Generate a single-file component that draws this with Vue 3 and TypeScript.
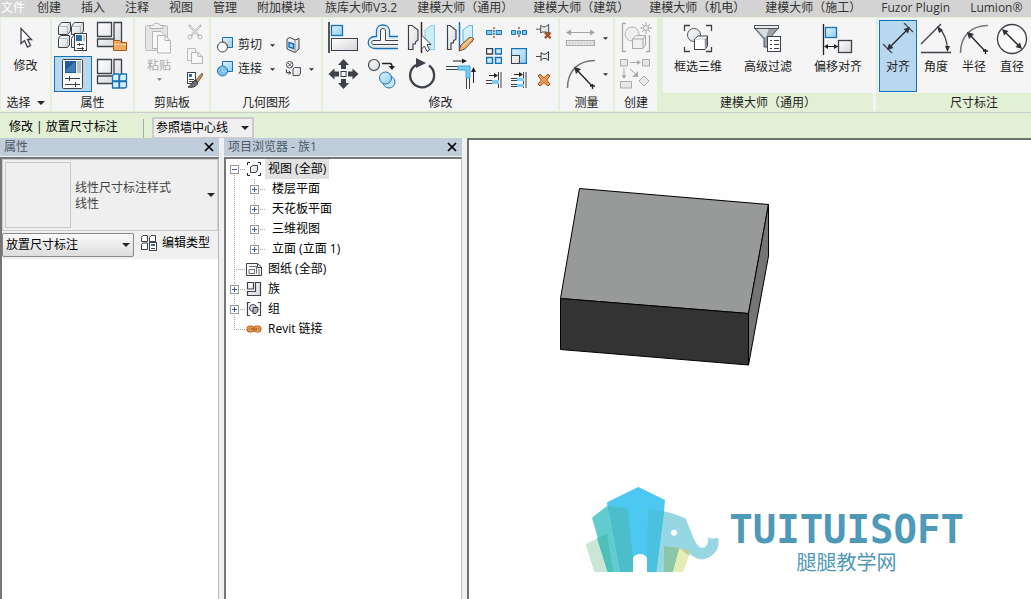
<script setup lang="ts">
import { ref } from 'vue'

interface TreeNode {
  label: string
  icon?: string
  children?: TreeNode[]
  expandable?: boolean
}

const tabs = [
  '文件', '创建', '插入', '注释', '视图', '管理', '附加模块', '族库大师V3.2',
  '建模大师（通用）', '建模大师（建筑）', '建模大师（机电）', '建模大师（施工）',
  'Fuzor Plugin', 'Lumion®',
]

const propertyTools = [
  { icon: 'family-types', name: '族类型', on: false },
  { icon: 'family-category', name: '族类别', on: false },
  { icon: 'properties', name: '属性', on: true },
  { icon: 'type-properties', name: '类型属性', on: false },
]

const clipTools = [
  { icon: 'cut', name: '剪切' },
  { icon: 'copy', name: '复制' },
  { icon: 'match', name: '匹配类型' },
]

const modifyLarge = [
  { icon: 'align', name: '对齐' },
  { icon: 'offset', name: '偏移' },
  { icon: 'mirror-pick', name: '镜像-拾取轴' },
  { icon: 'mirror-draw', name: '镜像-绘制轴' },
  { icon: 'move', name: '移动' },
  { icon: 'copy-element', name: '复制' },
  { icon: 'rotate', name: '旋转' },
  { icon: 'trim', name: '修剪' },
]

const modifySmall = [
  { icon: 'split', name: '拆分图元' },
  { icon: 'split-gap', name: '用间隙拆分' },
  { icon: 'unpin', name: '解锁' },
  { icon: 'array', name: '阵列' },
  { icon: 'scale', name: '缩放' },
  { icon: 'pin', name: '锁定' },
  { icon: 'trim-one', name: '修剪单个图元' },
  { icon: 'trim-many', name: '修剪多个图元' },
  { icon: 'delete', name: '删除' },
]

const masterTools = [
  { icon: 'box-3d', name: '框选三维' },
  { icon: 'filter', name: '高级过滤' },
  { icon: 'offset-align', name: '偏移对齐' },
]

const dimensionTools = [
  { icon: 'dim-aligned', name: '对齐' },
  { icon: 'dim-angular', name: '角度' },
  { icon: 'dim-radial', name: '半径' },
  { icon: 'dim-diameter', name: '直径' },
]

const activeDimension = ref('对齐')
const viewsOpen = ref(true)

const tree: TreeNode[] = [
  {
    label: '视图 (全部)',
    icon: 'tree-views',
    expandable: true,
    children: [
      { label: '楼层平面' },
      { label: '天花板平面' },
      { label: '三维视图' },
      { label: '立面 (立面 1)' },
    ],
  },
  { label: '图纸 (全部)', icon: 'tree-sheets' },
  { label: '族', icon: 'tree-family', expandable: true },
  { label: '组', icon: 'tree-group', expandable: true },
  { label: 'Revit 链接', icon: 'tree-link' },
]
</script>

<template>
  <svg class="defs" aria-hidden="true">
    <defs>
      <linearGradient id="metal" x1="0" y1="0" x2="1" y2="1">
        <stop offset="0" stop-color="#fff" /><stop offset="1" stop-color="#d4d6d9" />
      </linearGradient>
      <linearGradient id="glass" x1="0" y1="0" x2="1" y2="1">
        <stop offset="0" stop-color="#e2f4fc" /><stop offset="1" stop-color="#8fcdee" />
      </linearGradient>
    </defs>

    <symbol id="caret" viewBox="0 0 8 4"><path d="M0 0H8L4 4Z" fill="#24272c" /></symbol>

    <symbol id="cursor" viewBox="0 0 16 24">
      <path d="M3 1.500V16.500L6.500 13.500L9.500 20L12.500 18.500L9.500 12.500H13.500Z" fill="#fff" stroke="#3c414a" stroke-width="1.300" />
    </symbol>

    <symbol id="family-types" viewBox="0 0 32 32">
      <g fill="url(#metal)" stroke="#3c414a" stroke-linejoin="round">
        <path d="M1.500 5.500L4.500 1.500H13.500V10L10.500 13.500H1.500Z" />
        <path d="M14.500 5.500L17.500 1.500H26.500V10L23.500 13.500H14.500Z" />
        <path d="M1.500 17.500L3.500 14.500H12.500V24L10.500 26.500H1.500Z" />
        <path d="M14.500 17.500L16.500 14.500H24V26.500H14.500Z" />
      </g>
      <path d="M2 5.500H10.500V13M10.500 5.500L13 2M15 5.500H23.500V12M23.500 5.500L26 2M2 17.500H10.500V26" fill="none" stroke="#b5b8bd" />
      <rect x="17.500" y="12.500" width="12" height="17" fill="#fff" stroke="#3c414a" />
      <rect x="19" y="14" width="6" height="6" fill="#2d6aa8" /><rect x="26" y="14" width="2" height="6" fill="#c3c7cb" />
      <path d="M20 23.500H27M22.500 22V25M20 27.500H27M25.500 26V29" stroke="#3c414a" />
    </symbol>

    <symbol id="family-category" viewBox="0 0 32 32">
      <g fill="url(#metal)" stroke="#3c414a" stroke-width="1.300" stroke-linejoin="round">
        <path d="M1.500 1.500H15.500V15.500H1.500ZM18 1.500H25.500V24.500H18ZM1.500 18H18V25.500H1.500Z" />
      </g>
      <path d="M17.500 29.500V19.500H23.500L25 21.500H30.500V29.500Z" fill="#f0a95e" stroke="#a65a1c" />
      <path d="M18 23.500H30" stroke="#ffd3a0" />
    </symbol>

    <symbol id="properties" viewBox="0 0 32 32">
      <rect x="5.500" y="1.500" width="20" height="29" rx="1" fill="#fbfbfb" stroke="#3c414a" />
      <rect x="8" y="3" width="11" height="12" fill="#245a96" /><path d="M9 12L18 4V14H9Z" fill="#3f7db9" />
      <rect x="20" y="3" width="4" height="12" fill="#b9bfc6" />
      <path d="M8 20.500H23M12.500 18V23M8 26.500H23M18.500 24V29" stroke="#3c414a" />
    </symbol>

    <symbol id="type-properties" viewBox="0 0 32 32">
      <g fill="url(#metal)" stroke="#3c414a" stroke-width="1.300" stroke-linejoin="round">
        <path d="M1.500 1.500H15.500V15.500H1.500ZM18 1.500H25.500V18H18ZM1.500 18H18V25.500H1.500Z" />
      </g>
      <g fill="#d5effb" stroke="#1771b8" stroke-width="1.300" stroke-linejoin="round">
        <path d="M16.500 17.500L18 16H23V23H16.500ZM23.500 17.500L25 16H30.500V22L29 23H23.500ZM16.500 23.500H23V30H16.500ZM23.500 23.500H30.500V29L29 30H23.500Z" />
      </g>
    </symbol>

    <symbol id="paste" viewBox="0 0 32 32">
      <rect x="2.500" y="3.500" width="22" height="25" rx="1" fill="#e4e4e4" stroke="#bcbcbc" />
      <path d="M7 6.500V3.500H10C10 .5 17 .5 17 3.500H20V6.500Z" fill="#f0f0f0" stroke="#b0b0b0" />
      <path d="M9.500 9.500H18L22.500 14V26.500H9.500Z" fill="#f8f8f8" stroke="#b5b5b5" />
      <path d="M14.500 13.500H22L27.500 18.500V31H14.500Z" fill="#f8f8f8" stroke="#b5b5b5" /><path d="M22 13.500V18.500H27" fill="none" stroke="#b5b5b5" />
    </symbol>
    <symbol id="cut" viewBox="0 0 16 16">
      <path d="M2 1L12 12M14 1L4 12" stroke="#b4b4b4" stroke-width="2" /><path d="M3 2L12 12M13 2L4 12" stroke="#eee" />
      <circle cx="3" cy="13" r="2" fill="none" stroke="#b4b4b4" /><circle cx="13" cy="13" r="2" fill="none" stroke="#b4b4b4" />
    </symbol>
    <symbol id="copy" viewBox="0 0 16 16">
      <path d="M.5 .5H8.500V12.500H.5Z" fill="#f5f5f5" stroke="#bbb" /><path d="M4.500 4.500H11L15.500 8.500V15.500H4.500ZM11 4.500V8.500H15" fill="#f8f8f8" stroke="#b4b4b4" />
    </symbol>
    <symbol id="match" viewBox="0 0 16 16">
      <rect x=".5" y=".5" width="8" height="11" fill="#fff" stroke="#3c414a" /><rect x="2" y="2" width="3" height="3" fill="#2d6aa8" />
      <path d="M2 7.500H7M2 9.500H6" stroke="#3c414a" />
      <path d="M15 1L9 8L11 10L16 3Z" fill="#c98e52" stroke="#54412f" stroke-width=".7" /><path d="M8 8L11 11C9 15 5 16 1 15C4 14 5 10 8 8Z" fill="#6a6e73" stroke="#33363b" />
    </symbol>

    <symbol id="cut-geometry" viewBox="0 0 16 16">
      <path d="M5.500 .5H15.500V10.500H5.500Z" fill="url(#glass)" stroke="#1771b8" /><circle cx="5.500" cy="10" r="5" fill="#fdfdfd" stroke="#3c414a" /><path d="M5.500 5A5 5 0 0 1 10.500 10" fill="none" stroke="#a84a20" />
    </symbol>
    <symbol id="join-geometry" viewBox="0 0 16 16">
      <path d="M5.500 .5H15.500V10.500H5.500Z" fill="url(#glass)" stroke="#1771b8" /><circle cx="5.500" cy="10" r="5" fill="#7dbfe6" stroke="#1771b8" /><path d="M5.500 5.500V10.500H10" fill="none" stroke="#a9d9f3" />
    </symbol>
    <symbol id="cope" viewBox="0 0 16 16">
      <path d="M2 2L5 .5L10 3L14 1.500V12L10 15.500L2 12Z" fill="url(#metal)" stroke="#3c414a" /><path d="M10 3V15" stroke="#8a8e94" /><path d="M4 5.500L8.500 7V11.500L4 10Z" fill="#a9d9f3" stroke="#1771b8" stroke-width="1.500" />
    </symbol>
    <symbol id="paint" viewBox="0 0 17 17">
      <circle cx="5" cy="4" r="3.500" fill="#fff" stroke="#3c414a" /><path d="M3 2L7 6M7 2L3 6" stroke="#3c414a" /><path d="M1.500 9V12.500H6M4 10.500L6 12.500L4 14.500" fill="none" stroke="#222" />
      <path d="M8.500 8.500L10 7H16.500V13L15 15.500H8.500Z" fill="url(#metal)" stroke="#3c414a" />
    </symbol>

    <symbol id="align" viewBox="0 0 32 32">
      <path d="M1 0V31" stroke="#222" stroke-width="1.500" /><rect x="3.500" y="3.500" width="11" height="10" fill="url(#glass)" stroke="#1771b8" stroke-width="1.300" />
      <rect x="3.500" y="16.500" width="26" height="12" fill="url(#metal)" stroke="#3c414a" />
    </symbol>
    <symbol id="offset" viewBox="0 0 32 32">
      <path d="M31 18.500H18.500V9C18.500 5.500 13.500 5.500 13.500 9V18.500H7C3.500 18.500 3.500 22.500 7 22.500H31" fill="none" stroke="#3c414a" />
      <path d="M31 14.500H22.500V9C22.500 1 9.500 1 9.500 9V14.500H8C-1 14.500 -1 26.500 8 26.500H31" fill="none" stroke="#1771b8" stroke-width="1.300" />
      <path d="M31 16.500H20.500V9C20.500 3 11.500 3 11.500 9V16.500H8C2 16.500 2 24.500 8 24.500H31" fill="none" stroke="#dfe8ee" />
    </symbol>
    <symbol id="mirror-pick" viewBox="0 0 32 32">
      <path d="M2.500 3.500H6L12 8V18L9.500 20V22H7V27.500H2.500Z" fill="url(#metal)" stroke="#3c414a" stroke-width="1.200" /><path d="M28.500 3.500H25L19 8V18L21 20V22H24V27.500H28.500Z" fill="#cbeef6" stroke="#8dc9e1" />
      <path d="M15.500 0V31" stroke="#3d2420" stroke-width="1.500" /><path d="M15.500 13V27L18.500 24L21 29.500L23.500 28L21 22.500H25Z" fill="#fff" stroke="#3c414a" />
    </symbol>
    <symbol id="mirror-draw" viewBox="0 0 32 32">
      <path d="M2.500 3.500H5L11 8V17L8.500 19V21H6V27.500H2.500Z" fill="url(#metal)" stroke="#3c414a" stroke-width="1.200" /><path d="M27.500 3.500H24L18 8V20H27.500Z" fill="#d3effa" stroke="#62b3df" />
      <path d="M14.500 0V28" stroke="#1771b8" stroke-width="1.500" /><path d="M14 29L16 23L25 15L29 17L20 27Z" fill="#f1b370" stroke="#75502f" /><path d="M18 24L27 16" stroke="#ffe3b8" />
    </symbol>
    <symbol id="move" viewBox="0 0 32 32">
      <path d="M15.500 1L21 7H18V11H13V7H10ZM15.500 31L21 25H18V21H13V25H10ZM.5 16L6.500 10.500V13.500H11V18.500H6.500V21.500ZM30.500 16L24.500 10.500V13.500H20V18.500H24.500V21.500Z" fill="#3c414a" /><rect x="13" y="13.500" width="5" height="5" fill="#fff" stroke="#3c414a" />
    </symbol>
    <symbol id="copy-element" viewBox="0 0 32 32">
      <circle cx="7" cy="7" r="5.500" fill="url(#metal)" stroke="#3c414a" stroke-width="1.200" /><path d="M15 5.500H23Q25 5.500 25 9" fill="none" stroke="#222" stroke-width="1.500" /><path d="M21.500 8H28L25 12Z" fill="#222" />
      <circle cx="22" cy="24" r="6" fill="#c7e9f8" stroke="#1771b8" /><circle cx="18.500" cy="20" r="6" fill="url(#glass)" stroke="#1771b8" />
    </symbol>
    <symbol id="rotate" viewBox="0 0 32 32">
      <path d="M10 7A12 12 0 1 0 23 7.500" fill="none" stroke="#3c414a" stroke-width="2.300" /><path d="M10 8L14 5.500" stroke="#3c414a" stroke-width="2.300" /><path d="M10 0L20 5L10 10Z" fill="#3c414a" />
    </symbol>
    <symbol id="trim" viewBox="0 0 32 32">
      <path d="M1 8.500H13M1 11.500H13M21.500 20V31M24.500 20V31" stroke="#3c414a" /><path d="M13 8H25V20H21V12H13Z" fill="#7acdf1" stroke="#3ba4dc" />
      <path d="M8 3H19M28.500 25V12" stroke="#222" /><path d="M17 .5L22 3L17 5.500ZM26 14H31L28.500 9Z" fill="#222" />
    </symbol>

    <symbol id="split" viewBox="0 0 16 16"><path d="M.5 6.500H6V10.500H.5ZM10 6.500H15.500V10.500H10Z" fill="#81cdf0" stroke="#1771b8" /><path d="M6 7H10V10H6Z" fill="#a5dcf4" /><path d="M8 3V14" stroke="#8f4a2a" stroke-dasharray="2 1" stroke-width="1.300" /></symbol>
    <symbol id="split-gap" viewBox="0 0 16 16"><path d="M.5 6.500H4.500V10.500H.5ZM11.500 6.500H15.500V10.500H11.500ZM6.500 7H9.500V10H6.500Z" fill="#81cdf0" stroke="#1771b8" /><path d="M8 3V6M8 11V14" stroke="#8f4a2a" stroke-dasharray="2 1" stroke-width="1.300" /></symbol>
    <symbol id="pin" viewBox="0 0 16 16"><path d="M0 8.500H5" stroke="#444" /><path d="M5 4.500V12.500L7 10.500H10L12.500 12.500V3.500L10 6H7Z" fill="url(#metal)" stroke="#3c414a" /></symbol>
    <symbol id="unpin" viewBox="0 0 17 17"><path d="M0 5.500H5" stroke="#444" /><path d="M5 1.500V9.500L7 8.500H10L13.500 9.500V.5L10 3H7Z" fill="url(#metal)" stroke="#3c414a" /><path d="M9.500 9L15.500 15M15.500 9L9.500 15" stroke="#a94c1c" stroke-width="2.500" /></symbol>
    <symbol id="array" viewBox="0 0 16 16"><path d="M.5 .5H6.500V6H.5Z" fill="#fff" stroke="#3c414a" stroke-width="1.500" /><path d="M9.500 .5H15.500V6H9.500ZM.5 9.500H6.500V15.500H.5ZM9.500 9.500H15.500V15.500H9.500Z" fill="#caeafa" stroke="#1771b8" stroke-width="1.500" /></symbol>
    <symbol id="scale" viewBox="0 0 16 16"><path d="M.5 .5H15.500V15.500H.5Z" fill="url(#glass)" stroke="#1771b8" stroke-width="1.300" /><rect x=".5" y="7.500" width="8" height="8" fill="url(#metal)" stroke="#3c414a" /></symbol>
    <symbol id="trim-one" viewBox="0 0 16 16"><path d="M0 8.500H6M0 11.500H6M12.500 0V16M15 0V16" stroke="#3c414a" /><rect x="6" y="8" width="7" height="4" fill="#7acdf1" /><path d="M3 3.500H9" stroke="#222" /><path d="M8 1L12 3.500L8 6Z" fill="#222" /></symbol>
    <symbol id="trim-many" viewBox="0 0 16 16"><path d="M0 6.500H6M0 8.500H6M0 12.500H6M0 14.500H6M12.500 0V16M15 0V16" stroke="#3c414a" /><path d="M6 6H13V9H6ZM6 12H13V15H6Z" fill="#7acdf1" /><path d="M3 2.500H9" stroke="#222" /><path d="M8 0L12 2.500L8 5Z" fill="#222" /></symbol>
    <symbol id="delete" viewBox="0 0 16 16"><path d="M2 4L4 2L8 6L12 2L14 4L10.500 8L14 12L12 14L8 10.500L4 14L2 12L5.500 8Z" fill="#f09b51" stroke="#a04a18" /></symbol>

    <symbol id="measure" viewBox="0 0 32 32"><path d="M3 10.500H28" stroke="#a5a5a5" /><path d="M1 10.500L6 7.500V13.500ZM30 10.500L25 7.500V13.500Z" fill="#a5a5a5" /><rect x="1.500" y="18.500" width="28" height="5" fill="#e4e4e4" stroke="#aaa" /><path d="M4 21H29" stroke="#aaa" stroke-dasharray="1 2" /></symbol>
    <symbol id="dim-radial" viewBox="0 0 32 32"><path d="M2.500 30C2.500 13 13 2.500 30 2.500" fill="none" stroke="#74787e" stroke-width="1.500" /><path d="M11 11L27 28M25 28H30M27.500 26V31" stroke="#222" stroke-width="1.300" /><path d="M9 9L16 11L11 16Z" fill="#2f3339" /></symbol>
    <symbol id="create-group" viewBox="0 0 32 32"><path d="M6 1.500H2.500V29.500H6M26 29.500H29.500V13" fill="none" stroke="#aaa" stroke-width="1.300" /><circle cx="12" cy="12" r="7" fill="#efefef" stroke="#b4b4b4" /><path d="M12.500 17L16 13.500H25.500V23L23 26.500H12.500ZM12.500 17H23V26M23 17L25.500 14" fill="#efefef" stroke="#aaa" /><path d="M26 0V12M20 6H32M22 2L30 10M30 2L22 10" stroke="#aaa" /><circle cx="26" cy="6" r="2.500" fill="#eee" stroke="#aaa" /></symbol>
    <symbol id="create-similar" viewBox="0 0 32 32"><path d="M.5 1.500H7.500V8H.5ZM22.500 1.500H29.500V8H22.500ZM.5 23.500H11.500V30H.5ZM24 18L29 23L24 28L19 23Z" fill="#e8e8e8" stroke="#aaa" /><path d="M10 4.500H19M4 10V20M10 11L18 18" stroke="#aaa" /><path d="M17 2L21 4.500L17 7ZM1.500 17H6.500L4 21ZM18 13V19H12Z" fill="#aaa" /></symbol>

    <symbol id="box-3d" viewBox="0 0 32 32"><path d="M2.500 8V2.500H8M24 2.500H29.500V8M2.500 24V28.500H8M24 28.500H29.500V24" fill="none" stroke="#3c414a" stroke-width="1.300" /><circle cx="12" cy="12" r="6.500" fill="url(#metal)" stroke="#50555d" /><path d="M12.500 16L16 13H25.500V23L23 26.500H12.500Z" fill="#fff" stroke="#3c414a" /><path d="M13 16H23V26" fill="none" stroke="#c5c8cc" /><path d="M23 16L25 14V22L23 26Z" fill="#8b9098" /></symbol>
    <symbol id="filter" viewBox="0 0 32 32"><path d="M2.500 5L12 16V24H17V16L26.500 5Z" fill="#9ca1a8" stroke="#50555d" /><path d="M4 5L12 14H14L17 5Z" fill="#dadde0" /><rect x="2.500" y="2.500" width="24" height="3" fill="#e9eaec" stroke="#50555d" /><rect x="15.500" y="13.500" width="13" height="15" fill="#fff" stroke="#3c414a" /><path d="M18 17.500H20M22 17.500H27M18 21.500H20M22 21.500H27M18 25.500H20M22 25.500H27" stroke="#3c414a" /></symbol>
    <symbol id="offset-align" viewBox="0 0 32 32"><path d="M1.500 1V32" stroke="#222" stroke-width="1.300" /><rect x="3.500" y="4.500" width="11" height="10" fill="url(#glass)" stroke="#1771b8" stroke-width="1.300" /><rect x="16.500" y="17.500" width="13" height="12" fill="url(#metal)" stroke="#3c414a" stroke-width="1.300" /><path d="M3 23.500H16" stroke="#222" /><path d="M2 23.500L6 21V26ZM16 23.500L12 21V26Z" fill="#222" /></symbol>
    <symbol id="dim-aligned" viewBox="0 0 32 32"><path d="M7 25L26 6" stroke="#222" stroke-width="1.300" /><path d="M1 21L10 30M22 0L31 9" stroke="#3c414a" stroke-width="1.200" /><path d="M5 27L7 20.500L11.500 25ZM28 4L26 10.500L21.500 6Z" fill="#2f3339" /></symbol>
    <symbol id="dim-angular" viewBox="0 0 32 32"><path d="M1 29.500H31M1 21L21 1" stroke="#3c414a" stroke-width="1.300" /><path d="M19 5Q27 13 27.500 27" fill="none" stroke="#3c414a" stroke-width="1.300" /><path d="M17 3L23 7L19 10ZM27.500 29L25 23H30Z" fill="#2f3339" /></symbol>
    <symbol id="dim-diameter" viewBox="0 0 32 32"><circle cx="16" cy="16" r="14.500" fill="#fafafa" stroke="#3c414a" stroke-width="1.300" /><path d="M8 8L24 24" stroke="#222" stroke-width="1.300" /><path d="M6 6L12.500 8L8 12.500ZM26 26L24 19.500L19.500 24Z" fill="#2f3339" /></symbol>

    <symbol id="tree-views" viewBox="0 0 16 16"><path d="M1.500 4V1.500H4M12 1.500H14.500V4M1.500 12V14.500H4M12 14.500H14.500V12" fill="none" stroke="#222" /><path d="M4.500 6L7 4.500H11.500V9L10 11.500H4.500Z" fill="url(#metal)" stroke="#3c414a" /></symbol>
    <symbol id="tree-sheets" viewBox="0 0 16 16"><path d="M.5 2.500H11.500L15.500 6V14.500H.5ZM11.500 3V6.500H15" fill="#fafafa" stroke="#3c414a" /><path d="M3 12.500V8.500H8.500V12.500ZM3 5.500H10.500V12.500M13 8V14" fill="none" stroke="#6d7279" /></symbol>
    <symbol id="tree-family" viewBox="0 0 16 16"><path d="M1.500 1.500H7.500V8H1.500ZM9.500 1.500H14.500V14.500H1.500V10.500H9.500Z" fill="url(#metal)" stroke="#3c414a" stroke-width="1.200" /></symbol>
    <symbol id="tree-group" viewBox="0 0 16 16"><path d="M4 1.500H1.500V14.500H4M12 1.500H14.500V14.500H12" fill="none" stroke="#3c414a" stroke-width="1.200" /><circle cx="7" cy="7" r="3.500" fill="#ddd" stroke="#3c414a" /><path d="M7 6.500H12V10L10 12.500H7Z" fill="#aeb2b7" stroke="#3c414a" /></symbol>
    <symbol id="tree-link" viewBox="0 0 16 16"><g fill="none" stroke="#a85816" stroke-width="3"><rect x="2" y="6" width="5" height="4" rx="2" /><rect x="9" y="6" width="5" height="4" rx="2" /></g><g fill="none" stroke="#f1a04a" stroke-width="1.300"><rect x="2" y="6" width="5" height="4" rx="2" /><rect x="9" y="6" width="5" height="4" rx="2" /></g><path d="M5 8H11" stroke="#a85816" /></symbol>
    <symbol id="edit-type" viewBox="0 0 16 16"><path d="M.5 2.500L2 .5H6.500V6.500H.5ZM8.500 2.500L10 .5H14.500V6.500H8.500ZM.5 9.500L2 8H6.500V14.500H.5Z" fill="#fff" stroke="#3c414a" /><rect x="8.500" y="7.500" width="7" height="8" fill="#fff" stroke="#3c414a" /><rect x="10" y="9" width="4" height="2" fill="#2d6aa8" /><path d="M10 13.500H14" stroke="#3c414a" /></symbol>
    <symbol id="close" viewBox="0 0 10 10"><path d="M1 1L9 9M9 1L1 9" stroke="#000" stroke-width="1.700" /></symbol>
  </svg>

  <div class="app">
    <nav class="tabs">
      <button v-for="(tab, i) in tabs" :key="tab" class="tab" :class="{ file: i === 0 }">{{ tab }}</button>
    </nav>

    <header class="ribbon">
      <section class="panel select-panel">
        <button class="stack">
          <svg class="pointer"><use href="#cursor" /></svg><span>修改</span>
        </button>
        <button class="title">选择 <svg class="caret-md"><use href="#caret" /></svg></button>
      </section>

      <section class="panel">
        <div class="prop-grid">
          <button v-for="t in propertyTools" :key="t.icon" :class="{ on: t.on }" :aria-label="t.name">
            <svg class="i32"><use :href="'#' + t.icon" /></svg>
          </button>
        </div>
        <h2 class="title">属性</h2>
      </section>

      <section class="panel clip-panel">
        <div class="clip">
          <button class="stack paste" disabled>
            <svg class="i32"><use href="#paste" /></svg><span>粘贴</span>
            <svg class="caret-sm"><use href="#caret" /></svg>
          </button>
          <div class="small-column">
            <button v-for="t in clipTools" :key="t.icon" :aria-label="t.name"><svg class="i16"><use :href="'#' + t.icon" /></svg></button>
          </div>
        </div>
        <h2 class="title">剪贴板</h2>
      </section>

      <section class="panel">
        <div class="geometry">
          <div class="geometry-row">
            <button class="inline"><svg class="i16"><use href="#cut-geometry" /></svg>剪切<svg class="caret-sm"><use href="#caret" /></svg></button>
            <button aria-label="应用连接端切割"><svg class="i16"><use href="#cope" /></svg></button>
          </div>
          <div class="geometry-row">
            <button class="inline"><svg class="i16"><use href="#join-geometry" /></svg>连接<svg class="caret-sm"><use href="#caret" /></svg></button>
            <button class="inline" aria-label="填色"><svg class="i16"><use href="#paint" /></svg><svg class="caret-sm"><use href="#caret" /></svg></button>
          </div>
        </div>
        <h2 class="title">几何图形</h2>
      </section>

      <section class="panel">
        <div class="modify">
          <div class="large-grid">
            <button v-for="t in modifyLarge" :key="t.icon" :aria-label="t.name"><svg class="i32"><use :href="'#' + t.icon" /></svg></button>
          </div>
          <div class="small-grid">
            <button v-for="t in modifySmall" :key="t.icon" :aria-label="t.name"><svg class="i16"><use :href="'#' + t.icon" /></svg></button>
          </div>
        </div>
        <h2 class="title">修改</h2>
      </section>

      <section class="panel">
        <div class="pair">
          <button class="inline" aria-label="测量"><svg class="i32"><use href="#measure" /></svg><svg class="caret-sm"><use href="#caret" /></svg></button>
          <button class="inline" aria-label="尺寸标注"><svg class="i32"><use href="#dim-radial" /></svg><svg class="caret-sm"><use href="#caret" /></svg></button>
        </div>
        <h2 class="title">测量</h2>
      </section>

      <section class="panel create-panel">
        <div class="pair">
          <button aria-label="创建组" disabled><svg class="i32"><use href="#create-group" /></svg></button>
          <button aria-label="创建类似" disabled><svg class="i32"><use href="#create-similar" /></svg></button>
        </div>
        <h2 class="title">创建</h2>
      </section>

      <section class="panel green-title master-panel">
        <div class="tools">
          <button v-for="t in masterTools" :key="t.icon" class="stack wide">
            <svg class="i32"><use :href="'#' + t.icon" /></svg><span>{{ t.name }}</span>
          </button>
        </div>
        <h2 class="title">建模大师（通用）</h2>
      </section>

      <section class="panel green-title dimension-panel">
        <div class="tools">
          <button v-for="t in dimensionTools" :key="t.icon" class="stack narrow" :class="{ on: activeDimension === t.name }" @click="activeDimension = t.name">
            <svg class="i32"><use :href="'#' + t.icon" /></svg><span>{{ t.name }}</span>
          </button>
        </div>
        <h2 class="title">尺寸标注</h2>
      </section>
    </header>

    <div class="options">
      <span class="mode">修改 | 放置尺寸标注</span>
      <div class="select wall-select">
        <select aria-label="参照"><option>参照墙中心线</option></select>
        <svg class="caret-md"><use href="#caret" /></svg>
      </div>
    </div>

    <main class="workspace">
      <aside class="dock properties-dock">
        <h2 class="dock-title">属性<button aria-label="关闭属性"><svg class="close"><use href="#close" /></svg></button></h2>
        <div class="dock-body">
          <button class="type-selector">
            <span class="preview"></span>
            <span class="type-name">线性尺寸标注样式<br>线性</span>
            <svg class="caret-md"><use href="#caret" /></svg>
          </button>
          <div class="filter-row">
            <div class="select filter-select">
              <select aria-label="属性过滤器"><option>放置尺寸标注</option></select>
              <svg class="caret-md"><use href="#caret" /></svg>
            </div>
            <button class="edit-type"><svg class="i16"><use href="#edit-type" /></svg>编辑类型</button>
          </div>
        </div>
      </aside>

      <aside class="dock browser-dock">
        <h2 class="dock-title">项目浏览器 - 族1<button aria-label="关闭项目浏览器"><svg class="close"><use href="#close" /></svg></button></h2>
        <div class="dock-body">
          <ul class="tree">
            <li v-for="(node, i) in tree" :key="node.label">
              <div class="row">
                <span class="gutter" :class="{ first: i === 0, last: i === tree.length - 1 }">
                  <button v-if="node.expandable" class="toggle" :class="{ plus: !(node.children && viewsOpen) }" :aria-label="'展开 ' + node.label" @click="node.children && (viewsOpen = !viewsOpen)"></button>
                </span>
                <svg class="i16"><use :href="'#' + node.icon" /></svg>
                <span class="label" :class="{ selected: i === 0 }">{{ node.label }}</span>
              </div>
              <ul v-if="node.children && viewsOpen" class="branch">
                <li v-for="(child, j) in node.children" :key="child.label" class="row">
                  <span class="gutter" :class="{ last: j === node.children.length - 1 }">
                    <button class="toggle plus" :aria-label="'展开 ' + child.label"></button>
                  </span>
                  <span class="label">{{ child.label }}</span>
                </li>
              </ul>
            </li>
          </ul>
        </div>
      </aside>

      <section class="canvas">
        <svg class="solid" viewBox="0 0 210 180" aria-label="三维模型">
          <g stroke="#000" stroke-linejoin="round">
            <path d="M19.500 .5L208.500 16.500L188.500 125.500L.5 110.500Z" fill="#989a99" />
            <path d="M208.500 16.500V68L188.500 177L188.500 125.500Z" fill="#757575" />
            <path d="M.5 110.500L188.500 125.500V177L.5 161.500Z" fill="#333" />
          </g>
        </svg>
        <div class="brand">
          <svg class="elephant" viewBox="30 33 405 261" aria-hidden="true">
            <path d="M32 208L96 176L104 291H58Z" fill="#cbe5d6" />
            <path d="M51 128L97 92L135 291H98Z" fill="#62cbcd" />
            <path d="M66 190L96 176L114 291H98Z" fill="#4cc0b9" />
            <path d="M219 101L267 109Q300 116 332 130L353 183Q366 218 382 219Q400 218 400 187L409 191L429 189Q437 220 411 241Q380 267 345 238L313 221L294 291H217Z" fill="#97d7e3" />
            <path d="M267 213L313 219L294 291H267Z" fill="#8bc6a7" />
            <path d="M313 219L345 231Q337 263 323 291H294Z" fill="#e5ecb6" />
            <path d="M313 219L345 228L341 242Z" fill="#c1cf92" />
            <path d="M96 82L190 36L270 75L267 110L244 291H216V249Q210 237 195 237Q180 237 174 249V291H135L97 92Z" fill="#4dc8f1" />
            <path d="M97 92L158 101L174 249V291H135Z" fill="#4cbdca" />
            <path d="M219 101L267 110L244 291H216Z" fill="#4bc0df" />
            <circle cx="297" cy="173" r="9" fill="#fff" />
          </svg>
          <div class="brand-text">
            <span class="wordmark">TUITUISOFT</span>
            <span class="brand-cn">腿腿教学网</span>
          </div>
        </div>
      </section>
    </main>
  </div>
</template>

<style>
body { margin: 0; }
</style>

<style scoped>
.app, .app * { box-sizing: border-box; }
.app {
  display: flex; flex-direction: column; min-height: 100vh; overflow: hidden;
  background: #f0f0f0; color: #222;
  font: 12px/16px "Open Sans", "Noto Sans CJK SC", sans-serif;
}
.defs { position: absolute; width: 0; height: 0; }
button { display: flex; align-items: center; padding: 0; border: 0; background: none; color: inherit; font: inherit; white-space: nowrap; }
svg { display: block; flex: none; }
h2 { margin: 0; font: inherit; }
.i32 { width: 32px; height: 32px; }
.i16 { width: 16px; height: 16px; }
.caret-sm { width: 5px; height: 3px; }
.caret-md { width: 8px; height: 4px; }
.close { width: 10px; height: 10px; }

.tabs { display: flex; gap: 20px; height: 17px; padding-left: 1px; background: #d3d3d3; overflow: hidden; }
.tab { flex: none; height: 16px; color: #333; }
.file { margin-right: -8px; color: #fff; }

.ribbon { display: flex; gap: 2px; height: 96px; padding: 1px 0 1px 1px; background: #e2f0d6; border-bottom: 1px solid #ccc; overflow: hidden; }
.panel { display: flex; flex: none; flex-direction: column; justify-content: space-between; background: #f5f5f5; }
.title { display: flex; justify-content: center; align-items: center; gap: 6px; height: 18px; padding-top: 1px; }
.green-title .title { background: #e2f0d6; }
.select-panel { width: 49px; }
.stack { display: flex; flex-direction: column; align-items: center; }
.select-panel .stack { padding-top: 9px; gap: 7px; }
.pointer { width: 16px; height: 24px; }

.prop-grid { display: grid; grid-template-columns: 38px 38px; grid-template-rows: 36px 36px; gap: 1px; padding: 1px 2px 0; }
.prop-grid button { justify-content: center; border: 1px solid transparent; }
.prop-grid .on, .narrow.on { background: #b8d8f0; border-color: #1771b8; }

.clip-panel { width: 74px; }
.clip { display: flex; justify-content: space-between; padding: 4px 6px 0 8px; }
.paste { color: #aaa; gap: 4px; }
.paste .caret-sm { opacity: .6; }
.small-column { display: grid; gap: 8px; padding-top: 2px; }

.geometry { display: grid; gap: 8px; padding: 19px 6px 0; }
.geometry-row { display: flex; gap: 10px; width: 98px; height: 16px; }
.inline { gap: 5px; }
.geometry-row .caret-sm { margin-left: 3px; }

.modify { display: flex; gap: 9px; padding: 4px 6px 0 5px; }
.large-grid { display: grid; grid-template-columns: repeat(4, 32px); gap: 4px 7px; }
.small-grid { display: grid; grid-template-columns: repeat(3, 16px); grid-auto-rows: 16px; gap: 8px 9px; padding-top: 2px; }

.pair { display: grid; gap: 4px; padding: 4px 5px; }
.pair .inline { gap: 6px; }
.create-panel { margin-right: 4px; }

.tools { display: flex; height: 75px; }
.master-panel { padding-right: 3px; }
.wide { width: 70px; padding-top: 5px; gap: 4px; }
.dimension-panel { flex: 1 0 192px; }
.dimension-panel .tools { padding: 2px 1px; }
.narrow { width: 38px; height: 72px; padding-top: 2px; gap: 4px; border: 1px solid transparent; }
.wide, .narrow { flex: none; }

.options { display: flex; align-items: flex-end; height: 25px; padding-left: 9px; background: #e2f0d6; color: #000; }
.mode { width: 135px; padding-bottom: 3px; border-right: 1px solid #aaa; }
.select { display: grid; align-items: center; border: 1px solid #999; background: linear-gradient(#fafafa, #ddd); }
.select > * { grid-area: 1 / 1; }
.select > svg { justify-self: end; margin-right: 3px; pointer-events: none; }
select { width: 100%; height: 100%; padding: 0 16px 0 3px; border: 0; appearance: none; background: none; color: #000; font: inherit; }
.wall-select { width: 102px; height: 21px; margin-left: 8px; background: #f0f0f0; border: 2px solid #ccc; border-bottom-width: 1px; }
.wall-select > select { padding-left: 2px; }

.workspace { display: flex; flex: 1; gap: 5px; }
.dock { display: flex; flex: none; flex-direction: column; }
.properties-dock { width: 219px; }
.browser-dock { width: 238px; }
.dock-title { display: flex; justify-content: space-between; align-items: center; height: 18px; padding: 0 5px 0 4px; margin-bottom: 1px; background: #bfcddb; color: #4d5864; }
.dock-body { flex: 1; background: #fff; border: solid #767676; border-width: 2px 1px 0 2px; border-right-color: #bbb; }

.type-selector { width: 100%; height: 72px; padding: 2px; gap: 4px; background: #efefef; border: 1px solid #ccc; text-align: left; color: #444; }
.preview { width: 66px; height: 66px; border: 1px solid #c8c8c8; }
.type-name { flex: 1; padding-top: 2px; }
.filter-row { display: flex; gap: 7px; height: 28px; padding: 2px 0; background: #f0f0f0; }
.filter-select { width: 132px; border-radius: 2px; border-color: #888; }
.edit-type { gap: 5px; height: 20px; color: #000; }

.tree, .branch { margin: 0; padding: 0; list-style: none; color: #000; }
.branch { padding-left: 20px; background: repeating-linear-gradient(#aaa 0 1px, transparent 1px 2px) 8px 0 / 1px 100% no-repeat; }
.row { display: flex; align-items: center; height: 20px; }
.gutter {
  display: flex; align-items: center; width: 20px; height: 20px; padding-left: 4px;
  background:
    repeating-linear-gradient(#aaa 0 1px, transparent 1px 2px) 8px 0 / 1px 100% no-repeat,
    repeating-linear-gradient(90deg, #aaa 0 1px, transparent 1px 2px) 8px 10px / 12px 1px no-repeat;
}
.gutter.first { background-position: 8px 10px, 8px 10px; }
.gutter.last { background-size: 1px 10px, 12px 1px; }
.toggle {
  width: 9px; height: 9px; border: 1px solid #999;
  background: linear-gradient(#3d5c9c, #3d5c9c) center / 5px 1px no-repeat, #fff;
}
.toggle.plus {
  background: linear-gradient(#3d5c9c, #3d5c9c) center / 5px 1px no-repeat, linear-gradient(#3d5c9c, #3d5c9c) center / 1px 5px no-repeat, #fff;
}
.label { height: 20px; margin-left: 3px; padding: 2px 3px; white-space: nowrap; }
.selected { background: #e1e1e1; }

.canvas { position: relative; flex: 1; min-width: 0; background: #fefefe; border: solid #707070; border-width: 2px 0 0 2px; }
.solid { position: absolute; left: 91px; top: 48px; width: 210px; height: 180px; }
.brand { position: absolute; right: 67px; bottom: 26px; display: flex; align-items: flex-end; gap: 9px; color: #4e98b8; }
.elephant { width: 135px; height: 87px; }
.brand-text { display: flex; flex-direction: column; align-items: center; }
.wordmark { font: bold 39px/46px "DejaVu Sans Mono", monospace; }
.brand-cn { font-size: 20px; line-height: 20px; }
</style>
